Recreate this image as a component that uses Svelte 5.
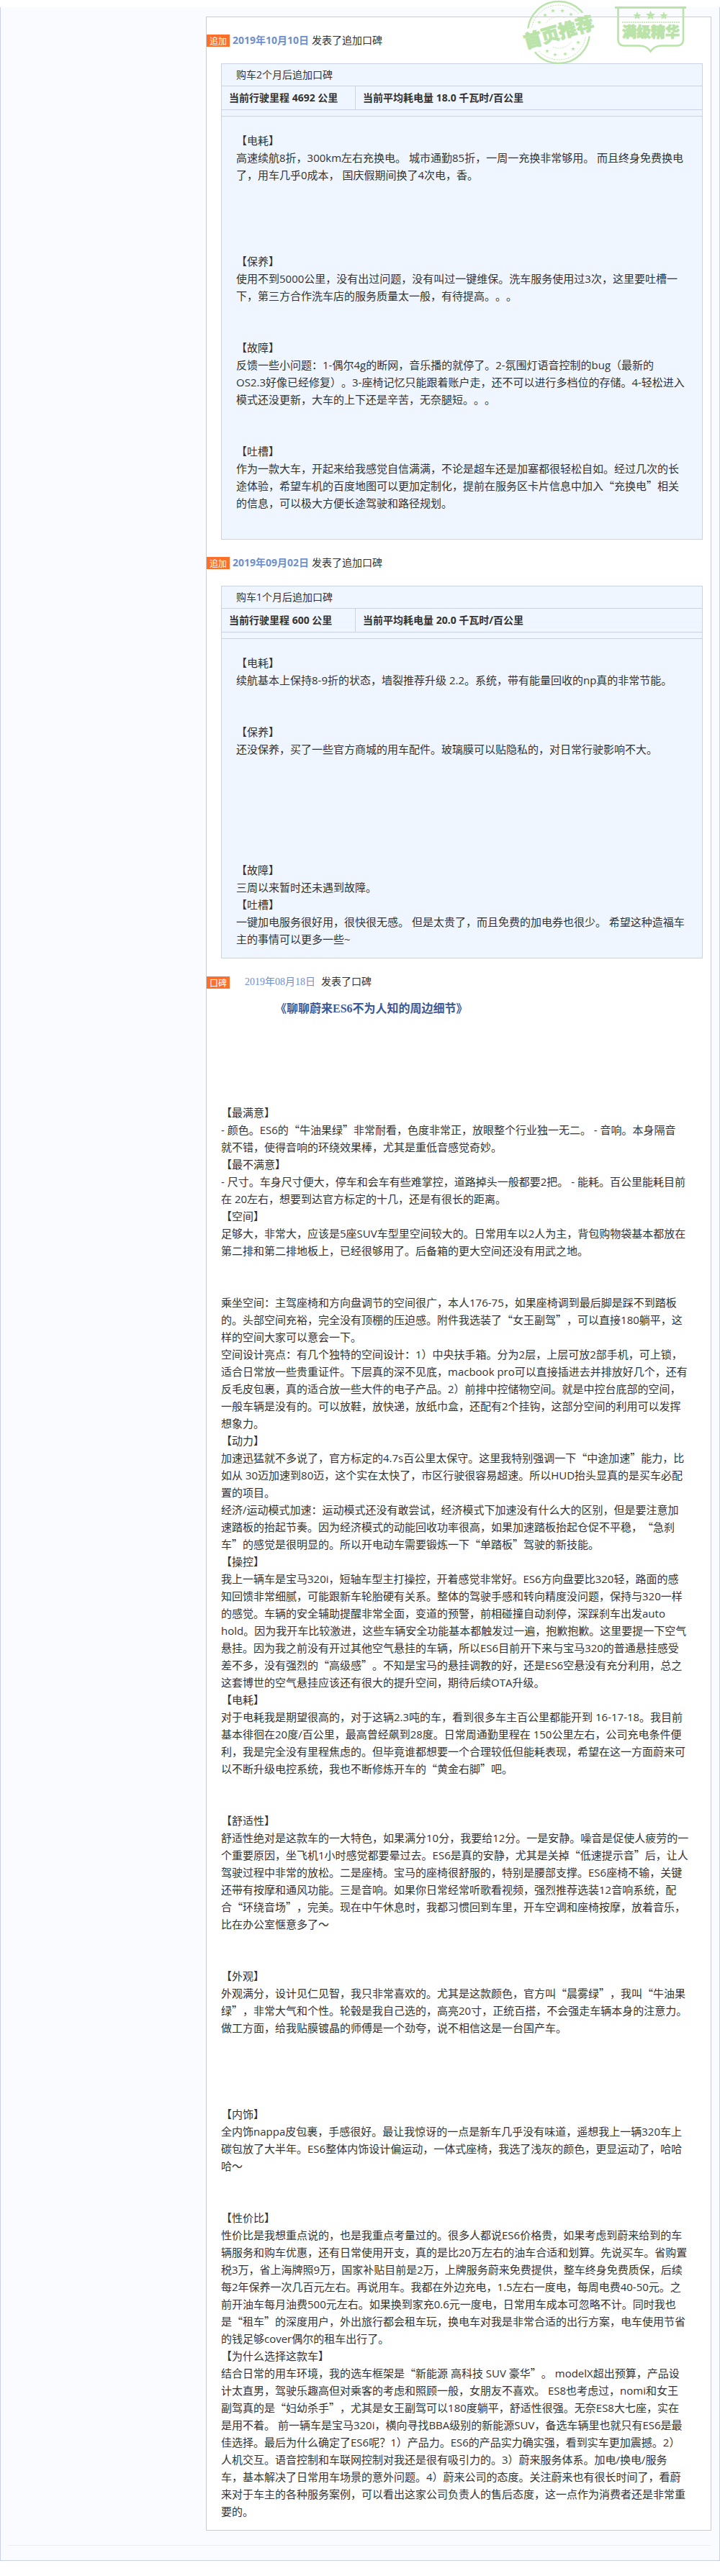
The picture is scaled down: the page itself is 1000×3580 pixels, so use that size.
<script>
  const appended = [
    {
      date: '2019年10月10日',
      when: '购车2个月后追加口碑',
      mileage: '4692',
      usage: '18.0',
      trailing: true,
      text: `【电耗】
高速续航8折，300km左右充换电。 城市通勤85折，一周一充换非常够用。 而且终身免费换电
了，用车几乎0成本， 国庆假期间换了4次电，香。




【保养】
使用不到5000公里，没有出过问题，没有叫过一键维保。洗车服务使用过3次，这里要吐槽一
下，第三方合作洗车店的服务质量太一般，有待提高。。。


【故障】
反馈一些小问题：1-偶尔4g的断网，音乐播的就停了。2-氛围灯语音控制的bug（最新的
OS2.3好像已经修复）。3-座椅记忆只能跟着账户走，还不可以进行多档位的存储。4-轻松进入
模式还没更新，大车的上下还是辛苦，无奈腿短。。。


【吐槽】
作为一款大车，开起来给我感觉自信满满，不论是超车还是加塞都很轻松自如。经过几次的长
途体验，希望车机的百度地图可以更加定制化，提前在服务区卡片信息中加入“充换电”相关
的信息，可以极大方便长途驾驶和路径规划。`
    },
    {
      date: '2019年09月02日',
      when: '购车1个月后追加口碑',
      mileage: '600',
      usage: '20.0',
      trailing: false,
      text: `【电耗】
续航基本上保持8-9折的状态，墙裂推荐升级 2.2。系统，带有能量回收的np真的非常节能。


【保养】
还没保养，买了一些官方商城的用车配件。玻璃膜可以贴隐私的，对日常行驶影响不大。






【故障】
三周以来暂时还未遇到故障。
【吐槽】
一键加电服务很好用，很快很无感。 但是太贵了，而且免费的加电券也很少。 希望这种造福车
主的事情可以更多一些~`
    }
  ];

  const review = `【最满意】
- 颜色。ES6的“牛油果绿”非常耐看，色度非常正，放眼整个行业独一无二。 - 音响。本身隔音
就不错，使得音响的环绕效果棒，尤其是重低音感觉奇妙。
【最不满意】
- 尺寸。车身尺寸便大，停车和会车有些难掌控，道路掉头一般都要2把。 - 能耗。百公里能耗目前
在 20左右，想要到达官方标定的十几，还是有很长的距离。
【空间】
足够大，非常大，应该是5座SUV车型里空间较大的。日常用车以2人为主，背包购物袋基本都放在
第二排和第二排地板上，已经很够用了。后备箱的更大空间还没有用武之地。


乘坐空间：主驾座椅和方向盘调节的空间很广，本人176-75，如果座椅调到最后脚是踩不到踏板
的。头部空间充裕，完全没有顶棚的压迫感。附件我选装了“女王副驾”，可以直接180躺平，这
样的空间大家可以意会一下。
空间设计亮点：有几个独特的空间设计：1）中央扶手箱。分为2层，上层可放2部手机，可上锁，
适合日常放一些贵重证件。下层真的深不见底，macbook pro可以直接插进去并排放好几个，还有
反毛皮包裹，真的适合放一些大件的电子产品。2）前排中控储物空间。就是中控台底部的空间，
一般车辆是没有的。可以放鞋，放快递，放纸巾盒，还配有2个挂钩，这部分空间的利用可以发挥
想象力。
【动力】
加速迅猛就不多说了，官方标定的4.7s百公里太保守。这里我特别强调一下“中途加速”能力，比
如从 30迈加速到80迈，这个实在太快了，市区行驶很容易超速。所以HUD抬头显真的是买车必配
置的项目。
经济/运动模式加速：运动模式还没有敢尝试，经济模式下加速没有什么大的区别，但是要注意加
速踏板的抬起节奏。因为经济模式的动能回收功率很高，如果加速踏板抬起仓促不平稳，“急刹
车”的感觉是很明显的。所以开电动车需要锻炼一下“单踏板”驾驶的新技能。
【操控】
我上一辆车是宝马320i，短轴车型主打操控，开着感觉非常好。ES6方向盘要比320轻，路面的感
知回馈非常细腻，可能跟新车轮胎硬有关系。整体的驾驶手感和转向精度没问题，保持与320一样
的感觉。车辆的安全辅助提醒非常全面，变道的预警，前相碰撞自动刹停，深踩刹车出发auto
hold。因为我开车比较激进，这些车辆安全功能基本都触发过一遍，抱歉抱歉。这里要提一下空气
悬挂。因为我之前没有开过其他空气悬挂的车辆，所以ES6目前开下来与宝马320的普通悬挂感受
差不多，没有强烈的“高级感”。不知是宝马的悬挂调教的好，还是ES6空悬没有充分利用，总之
这套博世的空气悬挂应该还有很大的提升空间，期待后续OTA升级。
【电耗】
对于电耗我是期望很高的，对于这辆2.3吨的车，看到很多车主百公里都能开到 16-17-18。我目前
基本徘徊在20度/百公里，最高曾经飙到28度。日常周通勤里程在 150公里左右，公司充电条件便
利，我是完全没有里程焦虑的。但毕竟谁都想要一个合理较低但能耗表现，希望在这一方面蔚来可
以不断升级电控系统，我也不断修炼开车的“黄金右脚”吧。


【舒适性】
舒适性绝对是这款车的一大特色，如果满分10分，我要给12分。一是安静。噪音是促使人疲劳的一
个重要原因，坐飞机1小时感觉都要晕过去。ES6是真的安静，尤其是关掉“低速提示音”后，让人
驾驶过程中非常的放松。二是座椅。宝马的座椅很舒服的，特别是腰部支撑。ES6座椅不输，关键
还带有按摩和通风功能。三是音响。如果你日常经常听歌看视频，强烈推荐选装12音响系统，配
合“环绕音场”，完美。现在中午休息时，我都习惯回到车里，开车空调和座椅按摩，放着音乐，
比在办公室惬意多了～


【外观】
外观满分，设计见仁见智，我只非常喜欢的。尤其是这款颜色，官方叫“晨雾绿”，我叫“牛油果
绿”，非常大气和个性。轮毂是我自己选的，高亮20寸，正统百搭，不会强走车辆本身的注意力。
做工方面，给我贴膜镀晶的师傅是一个劲夸，说不相信这是一台国产车。




【内饰】
全内饰nappa皮包裹，手感很好。最让我惊讶的一点是新车几乎没有味道，遥想我上一辆320车上
碳包放了大半年。ES6整体内饰设计偏运动，一体式座椅，我选了浅灰的颜色，更显运动了，哈哈
哈～


【性价比】
性价比是我想重点说的，也是我重点考量过的。很多人都说ES6价格贵，如果考虑到蔚来给到的车
辆服务和购车优惠，还有日常使用开支，真的是比20万左右的油车合适和划算。先说买车。省购置
税3万，省上海牌照9万，国家补贴目前是2万，上牌服务蔚来免费提供，整车终身免费质保，后续
每2年保养一次几百元左右。再说用车。我都在外边充电，1.5左右一度电，每周电费40-50元。之
前开油车每月油费500元左右。如果换到家充0.6元一度电，日常用车成本可忽略不计。同时我也
是“租车”的深度用户，外出旅行都会租车玩，换电车对我是非常合适的出行方案，电车使用节省
的钱足够cover偶尔的租车出行了。
【为什么选择这款车】
结合日常的用车环境，我的选车框架是“新能源 高科技 SUV 豪华”。 modelX超出预算，产品设
计太直男，驾驶乐趣高但对乘客的考虑和照顾一般，女朋友不喜欢。 ES8也考虑过，nomi和女王
副驾真的是“妇幼杀手”，尤其是女王副驾可以180度躺平，舒适性很强。无奈ES8大七座，实在
是用不着。 前一辆车是宝马320i，横向寻找BBA级别的新能源SUV，备选车辆里也就只有ES6是最
佳选择。最后为什么确定了ES6呢？1）产品力。ES6的产品实力确实强，看到实车更加震撼。2）
人机交互。语音控制和车联网控制对我还是很有吸引力的。3）蔚来服务体系。加电/换电/服务
车，基本解决了日常用车场景的意外问题。4）蔚来公司的态度。关注蔚来也有很长时间了，看蔚
来对于车主的各种服务案例，可以看出这家公司负责人的售后态度，这一点作为消费者还是非常重
要的。`;

  // Curly quotes are set in the Chinese face so that they take a full em.
  const pieces = (line) => line.split(/([“”])/).filter(Boolean);

  const star = (cx, cy, r) =>
    Array.from({ length: 10 }, (_, i) => {
      const a = (Math.PI * i) / 5 - Math.PI / 2;
      const d = i % 2 ? r * 0.42 : r;
      return `${(cx + d * Math.cos(a)).toFixed(2)},${(cy + d * Math.sin(a)).toFixed(2)}`;
    }).join(' ');

  const ringStars = [
    [-27, -14], [-19, -24], [-8, -30], [5, -30], [17, -25],
    [-16, 26], [-5, 31], [9, 30], [20, 23], [27, 14]
  ];
</script>

{#snippet prose(text)}
  {#each text.split('\n') as line}
    <p>{#each pieces(line) as piece}{#if piece === '“' || piece === '”'}<span class="quote">{piece}</span>{:else}{piece}{/if}{/each}</p>
  {/each}
{/snippet}

<main class="frame">
  <article class="card">
    <div class="stamps">
      <svg class="stamp-home" viewBox="-64 -45 128 90" role="img" aria-label="首页推荐">
        <defs>
          <mask id="band" maskUnits="userSpaceOnUse" x="-64" y="-45" width="128" height="90">
            <rect x="-64" y="-45" width="128" height="90" fill="#fff" />
            <rect x="-60" y="-17" width="120" height="34" fill="#000" transform="rotate(-16)" />
          </mask>
        </defs>
        <g mask="url(#band)" fill="none" stroke="#b9e3a8">
          <circle r="43" stroke-width="2.4" />
          <circle r="38" stroke-width="1" stroke-dasharray="2 1.4" />
          <circle r="22" stroke-width="0.8" stroke-dasharray="2 1.4" />
        </g>
        {#each ringStars as [x, y]}
          <polygon points={star(x, y, 3)} fill="#b9e3a8" />
        {/each}
        <text class="stamp-text big" transform="rotate(-16)" x="0" y="9" text-anchor="middle">首页推荐</text>
      </svg>
      <svg class="stamp-best" viewBox="0 0 100 66" role="img" aria-label="满级精华">
        <rect x="0" y="0" width="99" height="3" fill="#b9e3a8" />
        <path d="M4.5 3V46Q4.5 54.5 13 54.5H34Q44 54.5 49.5 62.5Q55 54.5 65 54.5H86Q95 54.5 95 46V3" fill="none" stroke="#b9e3a8" stroke-width="2.6" />
        <polygon points={star(31, 13, 6)} fill="#b9e3a8" />
        <polygon points={star(49.5, 12.5, 7)} fill="#b9e3a8" />
        <polygon points={star(68, 13, 6)} fill="#b9e3a8" />
        <path d="M10 22H90" stroke="#b9e3a8" stroke-width="1.4" stroke-dasharray="2 1" />
        <text class="stamp-text small" x="50" y="43" text-anchor="middle">满级精华</text>
      </svg>
    </div>

    {#each appended as post}
      <section>
        <header class="posted">
          <span class="tag">追加</span>
          <a class="date" href="#review">{post.date}</a>
          <span>发表了追加口碑</span>
        </header>
        <div class="box">
          <div class="when">{post.when}</div>
          <div class="stats">
            <div class="stat">当前行驶里程 {post.mileage} 公里</div>
            <div class="stat">当前平均耗电量 {post.usage} 千瓦时/百公里</div>
          </div>
          <div class="strip"></div>
          <div class="prose boxed" class:trailing={post.trailing}>{@render prose(post.text)}</div>
        </div>
      </section>
    {/each}

    <section id="review">
      <header class="posted original">
        <span class="tag">口碑</span>
        <a class="date plain" href="#review">2019年08月18日</a>
        <span>发表了口碑</span>
      </header>
      <h1><a href="#review">《聊聊蔚来ES6不为人知的周边细节》</a></h1>
      <div class="prose">{@render prose(review)}</div>
    </section>
  </article>
  <hr />
</main>

<style>
  :global(body) {
    margin: 0;
    background: #fff;
  }

  .frame {
    box-sizing: border-box;
    margin-top: 10px;
    padding: 13px 11px 20px 10px;
    border: 1px solid #c9d2e6;
    border-top: 0;
    background: #fafbfe;
    color: #333;
    font: 14px/18px 'Open Sans', 'Noto Sans CJK SC', sans-serif;
    text-spacing-trim: space-all;
  }

  .card {
    position: relative;
    display: flow-root;
    margin-left: 275px;
    padding-bottom: 14px;
    border: 1px solid #ccc;
    background: #fff;
  }

  .stamps {
    position: absolute;
    top: -24px;
    right: 33px;
    display: flex;
    gap: 14px;
  }

  .stamp-home {
    width: 128px;
    height: 90px;
    overflow: visible;
  }

  .stamp-best {
    width: 100px;
    height: 66px;
    margin-top: 9px;
  }

  .stamp-text {
    fill: #b9e3a8;
    stroke: #b9e3a8;
    stroke-width: 0.8;
    font-family: 'Noto Sans CJK SC', sans-serif;
    font-weight: 900;
  }

  .big {
    font-size: 25px;
  }

  .small {
    font-size: 20px;
  }

  a {
    color: inherit;
    text-decoration: none;
  }

  .posted {
    display: flex;
    align-items: center;
    gap: 4px;
    height: 18px;
    margin: 23px 0;
  }

  .tag {
    width: 32px;
    background: #fc702b;
    color: #fff;
    font: 12px/17px 'Noto Sans CJK SC', sans-serif;
    text-align: center;
  }

  .date {
    color: #6f8fce;
    font-weight: 700;
  }

  .original {
    gap: 8px;
    margin: 24px 0 16px;
    font-family: 'Liberation Serif', 'Noto Sans CJK SC', serif;
  }

  .plain {
    margin-left: 13px;
    font-weight: 400;
  }

  .box {
    margin: 0 11px 0 20px;
    border: 1px solid #c9d2e6;
    background: #eff6ff;
  }

  .when {
    padding: 0 20px;
    border-bottom: 1px solid #c9d2e6;
    line-height: 30px;
  }

  .stats {
    display: grid;
    grid-template-columns: 186px 1fr;
    border-bottom: 1px solid #c9d2e6;
    font-weight: 700;
    line-height: 32px;
  }

  .stat {
    padding-left: 10px;
  }

  .stat:first-child {
    border-right: 1px solid #c9d2e6;
  }

  .strip {
    height: 8px;
    border-bottom: 1px solid #c9d2e6;
  }

  .prose {
    margin: 0 11px 0 20px;
    font-size: 15px;
    line-height: 24px;
  }

  .prose p {
    min-height: 24px;
    margin: 0;
  }

  .boxed {
    margin: 0;
    padding: 21px 4px 14px 20px;
  }

  .trailing {
    padding-bottom: 38px;
  }

  .quote {
    font-family: 'Noto Sans CJK SC', sans-serif;
    line-height: 1;
  }

  h1 {
    margin: 0 0 120px 95px;
    color: #3b5998;
    font: 700 16px/24px 'Liberation Serif', 'Noto Sans CJK SC', serif;
  }

  hr {
    margin: 20px 0 0;
    border: 0;
    border-top: 1px solid #eee;
  }
</style>
